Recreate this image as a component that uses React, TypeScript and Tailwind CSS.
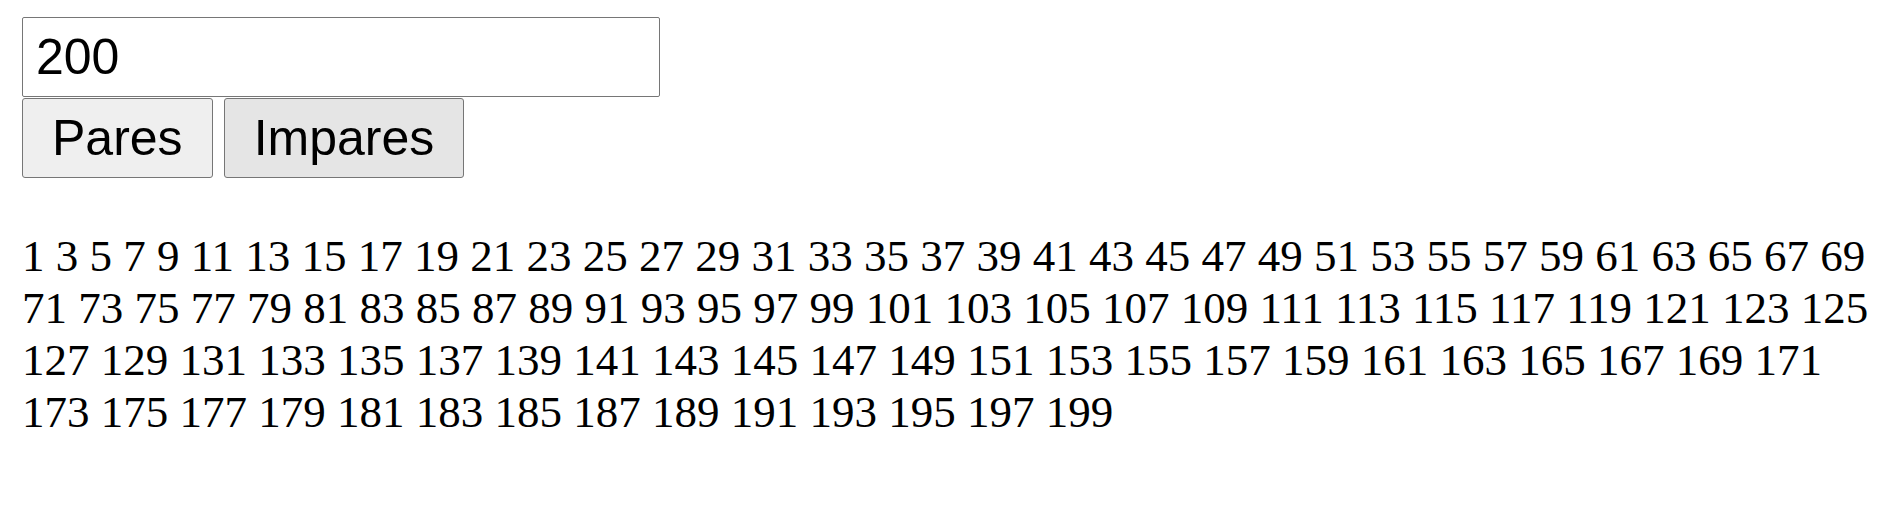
import React, { useState } from "react";

export default function App() {
  const [value, setValue] = useState("200");
  const [mode, setMode] = useState<"pares" | "impares">("impares");
  const n = parseInt(value, 10) || 0;
  const nums: number[] = [];
  for (let i = 1; i < n; i++) {
    if (mode === "impares" ? i % 2 === 1 : i % 2 === 0) nums.push(i);
  }
  return (
    <div className="min-h-screen bg-white pt-[17px] pl-[22px]">
      <input
        value={value}
        onChange={(e) => setValue(e.target.value)}
        className="block w-[638px] h-[80px] border border-[#767676] rounded-[2px] px-[13px] py-[10px] text-[50px] leading-[normal] text-black bg-white outline-none font-['Liberation_Sans',Arial,sans-serif]"
      />
      <div className="flex gap-[11px] mt-[1px]">
        <button
          onClick={() => setMode("pares")}
          className="h-[80px] px-[29px] border border-[#767676] rounded-[3px] bg-[#efefef] text-black text-[50px] leading-[normal] font-['Liberation_Sans',Arial,sans-serif]"
        >
          Pares
        </button>
        <button
          onClick={() => setMode("impares")}
          className="h-[80px] px-[29px] border border-[#767676] rounded-[3px] bg-[#e5e5e5] text-black text-[50px] leading-[normal] font-['Liberation_Sans',Arial,sans-serif]"
        >
          Impares
        </button>
      </div>
      <p className="mt-[52px] w-[1867px] text-[45px] leading-[normal] text-black font-['Liberation_Serif','Times_New_Roman',serif]">
        {nums.join(" ")}
      </p>
    </div>
  );
}
